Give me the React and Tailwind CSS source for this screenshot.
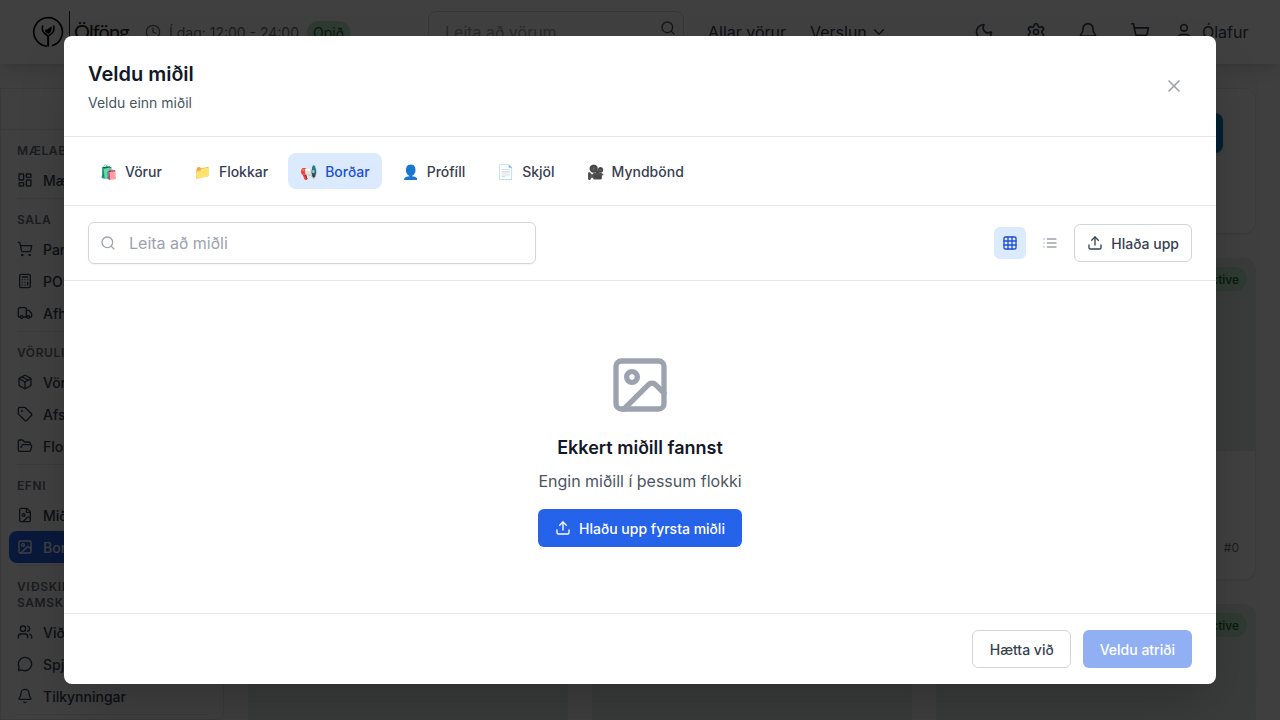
import {
  Bell, Calculator, ChevronDown, Clock, FileImage, FolderOpen, Grid3x3, Image, LayoutDashboard,
  MessageCircle, Moon, Package, Search, Settings, ShoppingCart, Tag, Truck, Upload, User, Users, X,
} from 'lucide-react';

const sections = [
  { title: 'Mælaborð', items: [[LayoutDashboard, 'Mælaborð']] },
  { title: 'Sala', items: [[ShoppingCart, 'Pantanir'], [Calculator, 'POS'], [Truck, 'Afhending']] },
  { title: 'Vörulisti', items: [[Package, 'Vörur'], [Tag, 'Afslættir'], [FolderOpen, 'Flokkar']] },
  { title: 'Efni', items: [[FileImage, 'Miðlar'], [Image, 'Borðar', true]] },
  { title: 'Viðskipti & Samskipti', items: [[Users, 'Viðskiptavinir'], [MessageCircle, 'Spjall'], [Bell, 'Tilkynningar']] },
];

const tabs = [
  ['🛍️', 'Vörur'],
  ['📁', 'Flokkar'],
  ['📢', 'Borðar', true],
  ['👤', 'Prófíll'],
  ['📄', 'Skjöl'],
  ['🎥', 'Myndbönd'],
];

function ListIcon() {
  return (
    <svg width="16" height="16" viewBox="0 0 24 24" fill="none" stroke="currentColor" strokeWidth="2" strokeLinecap="round">
      <path d="M8 6h13M8 12h13M8 18h13M3 6h.01M3 12h.01M3 18h.01" />
    </svg>
  );
}

function Logo() {
  return (
    <div className="flex h-[42px] items-center text-black">
      <svg width="32" height="32" viewBox="0 0 32 32" fill="none" stroke="currentColor" strokeWidth="1.6">
        <path d="M15 30.2A14.300 14.300 0 1 1 20 29.700" />
        <path d="M10.800 9.500c-1.600 4.800.6 7.600 3.700 9.300 1.200.7 1.500 1.500 1.500 2.700v9M21.500 9.500c1.600 4.800-.6 7.600-3.700 9.300-1.200.7-1.500 1.500-1.500 2.700v9" />
        <path d="M12.800 13.800c2.500.3 4-1.800 6.500-3.300.8 3 .3 5.800-3.200 7.300-2.200-.6-3.300-2.100-3.300-4z" fill="currentColor" stroke="none" />
      </svg>
      <div className="ml-[5px] h-[42px] w-px bg-[#222222]" />
      <span className="ml-1 w-[56px] pb-0.5 font-['Lato',sans-serif] text-[20px] leading-[36px] font-normal tracking-[-0.9px] text-[#222222]">Ölföng</span>
    </div>
  );
}

function Navbar() {
  return (
    <header className="relative z-10 flex h-16 shrink-0 items-center bg-white pl-8 text-[#374151] shadow-lg">
      <Logo />
      <div className="ml-[15px] flex items-center text-[#6b7280]">
        <Clock size={16} />
        <span className="ml-2 w-[130px] pt-0.5 text-sm/5 whitespace-nowrap">Í dag: 12:00 - 24:00</span>
        <span className="ml-2 flex h-[22px] w-[43px] items-center justify-center rounded-full bg-[#bce8c8] pt-0.5 text-sm/5 text-[#166534]">Opið</span>
      </div>
      <div className="ml-[78px] flex h-[42px] w-64 items-center rounded-lg border border-[#d1d5db] px-4 text-[#9ca3af]">
        <span className="flex-1">Leita að vörum</span>
        <Search size={16} className="mb-[9px] -mr-[9px] text-[#4b5563]" />
      </div>
      <span className="ml-6 w-[78px] whitespace-nowrap">Allar vörur</span>
      <span className="ml-6 w-[57px]">Verslun</span>
      <ChevronDown size={18} className="ml-[3px]" />
      <div className="ml-[86px] flex gap-8">
        <Moon size={20} />
        <Settings size={20} />
        <Bell size={20} />
        <ShoppingCart size={20} />
      </div>
      <User size={20} className="ml-6" />
      <span className="ml-2">Ólafur</span>
    </header>
  );
}

function Sidebar() {
  return (
    <aside className="h-[632px] w-56 shrink-0 rounded-br-lg border border-[#e5e7eb] bg-white">
      <div className="h-10" />
      {sections.map((s, i) => (
        <section key={s.title} className="mb-0.5 px-2">
          <div className={i ? 'mx-2 h-px bg-[#e5e7eb]' : '-mx-2 h-px bg-[#e5e7eb]'} />
          <h3 className="mt-[13px] mb-[5px] w-32 px-2 text-xs/4 font-semibold tracking-wider text-[#6b7280] uppercase">{s.title}</h3>
          {s.items.map(([Icon, label, active]) => (
            <div
              key={label}
              className={
                active
                  ? 'flex h-8 items-center gap-2.5 rounded-lg bg-[#2563eb] px-2 text-sm/5 font-medium text-white'
                  : 'flex h-8 items-center gap-2.5 px-2 text-sm/5 font-medium text-[#374151]'
              }
            >
              <Icon size={16} />
              <span className="pt-0.5">{label}</span>
            </div>
          ))}
        </section>
      ))}
      <div className="mx-4 h-px bg-[#e5e7eb]" />
    </aside>
  );
}

function BannerCard() {
  return (
    <article className="flex h-[322px] flex-col overflow-hidden rounded-xl border border-[#e5e7eb] bg-white shadow-xs">
      <div className="flex h-48 items-start justify-end bg-[#e8f0ec] p-2">
        <span className="flex h-6 items-center rounded-full bg-[#bce8c8] px-2 pt-0.5 text-xs/4 font-medium text-[#166534]">Active</span>
      </div>
      <div className="flex flex-1 items-end justify-end px-4 pb-[23px] text-xs/4 text-[#6b7280]">#0</div>
    </article>
  );
}

function Dashboard() {
  return (
    <div className="flex h-full flex-col overflow-hidden bg-[#f9fafb]">
      <Navbar />
      <div className="flex gap-6 pt-6">
        <Sidebar />
        <main className="flex w-[1008px] flex-col gap-6">
          <div className="flex h-[146px] shrink-0 justify-end rounded-xl border border-[#e5e7eb] bg-white px-8 pt-6 shadow-xs">
            <div className="h-10 w-36 rounded-lg bg-[#0284c7] shadow-md" />
          </div>
          <div className="grid grid-cols-3 gap-6">
            {[0, 1, 2, 3, 4, 5].map((n) => (
              <BannerCard key={n} />
            ))}
          </div>
        </main>
      </div>
    </div>
  );
}

function MediaDialog() {
  return (
    <div className="flex h-[648px] w-[1152px] flex-col rounded-lg bg-white shadow-2xl">
      <div className="flex items-center justify-between border-b border-[#e5e7eb] p-6">
        <div>
          <h2 className="text-xl/7 font-semibold text-[#111827]">Veldu miðil</h2>
          <p className="mt-[5px] -mb-px text-sm/5 text-[#4b5563]">Veldu einn miðil</p>
        </div>
        <button className="p-2 text-[#9ca3af]"><X size={20} /></button>
      </div>
      <div className="flex gap-2 border-b border-[#e5e7eb] px-6 py-4">
        {tabs.map(([emoji, label, active]) => (
          <button
            key={label}
            className={
              active
                ? 'flex items-center gap-2 rounded-lg bg-[#dbeafe] px-3 pt-[9px] pb-[7px] text-sm/5 font-medium text-[#1d4ed8]'
                : 'flex items-center gap-2 rounded-lg px-3 pt-[9px] pb-[7px] text-sm/5 font-medium text-[#374151]'
            }
          >
            <span>{emoji}</span>
            {label}
          </button>
        ))}
      </div>
      <div className="flex items-center justify-between border-b border-[#e5e7eb] px-6 py-4">
        <div className="flex h-[42px] w-md items-center gap-3 rounded-md border border-[#d1d5db] px-[11px] text-[#9ca3af] shadow-xs">
          <Search size={16} />
          <span className="ml-px">Leita að miðli</span>
        </div>
        <div className="flex items-center gap-2">
          <button className="rounded-md bg-[#dbeafe] p-2 text-[#1d4ed8]"><Grid3x3 size={16} /></button>
          <button className="p-2 text-[#9ca3af]"><ListIcon /></button>
          <button className="flex h-[38px] items-center gap-2 rounded-md border border-[#d1d5db] px-3 text-sm/5 font-medium text-[#374151]">
            <Upload size={16} />
            <span className="pt-0.5">Hlaða upp</span>
          </button>
        </div>
      </div>
      <div className="flex flex-1 flex-col items-center pt-[72px]">
        <Image size={64} className="text-[#9ca3af]" />
        <h3 className="mt-[17px] text-lg/7 font-semibold text-[#111827]">Ekkert miðill fannst</h3>
        <p className="mt-[7px] text-[#4b5563]">Engin miðill í þessum flokki</p>
        <button className="mt-4 flex h-[38px] items-center gap-2 rounded-md bg-[#2563eb] px-[17px] text-sm/5 font-medium text-white">
          <Upload size={16} />
          <span className="pt-0.5">Hlaðu upp fyrsta miðli</span>
        </button>
      </div>
      <div className="flex justify-end gap-3 border-t border-[#e5e7eb] px-6 py-4">
        <button className="h-[38px] w-[99px] rounded-md border border-[#d1d5db] pt-0.5 pl-px text-sm/5 font-medium text-[#374151]">Hætta við</button>
        <button className="h-[38px] rounded-md bg-[#2563eb] px-[17px] pt-0.5 text-sm/5 font-medium text-white opacity-50">Veldu atriði</button>
      </div>
    </div>
  );
}

export default function App() {
  return (
    <div className="relative h-screen overflow-hidden font-['Inter',sans-serif]">
      <Dashboard />
      <div className="absolute inset-0 z-50 flex items-center justify-center bg-black/75">
        <MediaDialog />
      </div>
    </div>
  );
}
